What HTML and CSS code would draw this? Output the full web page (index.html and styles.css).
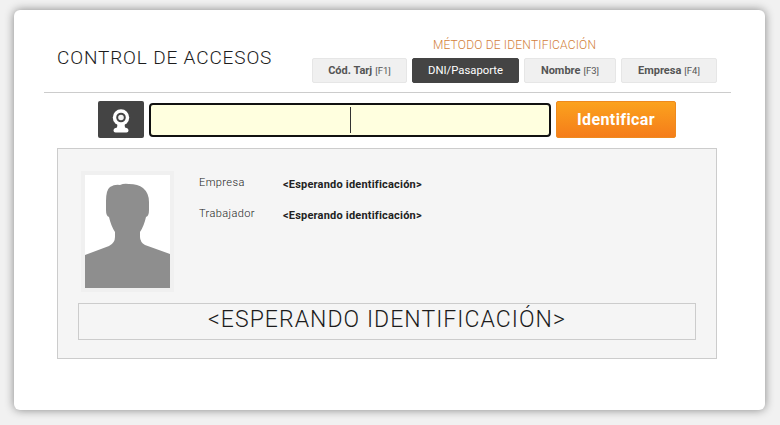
FILE: index.html
```html
<!DOCTYPE html>
<html lang="en">
<head>
    <meta charset="UTF-8">
    <title>Control de accesos</title>
    <link rel="stylesheet" href="styles.css">
</head>
<body>

    <div class="card">
        <div class="header">
            <h1>CONTROL DE ACCESOS</h1>
            <div class="method">
                <div class="method-label">MÉTODO DE IDENTIFICACIÓN</div>
                <div class="tabs">
                    <div class="tab tab-card"><b>Cód. Tarj</b> <span>[F1]</span></div>
                    <div class="tab tab-dni active">DNI/Pasaporte</div>
                    <div class="tab tab-name"><b>Nombre</b> <span>[F3]</span></div>
                    <div class="tab tab-company"><b>Empresa</b> <span>[F4]</span></div>
                </div>
            </div>
        </div>

        <div class="search">
            <div class="cam-btn">
                <svg width="18" height="24" viewBox="0 0 18 24">
                    <path d="M5.5 15 L5 18.5 Q1.5 19 1.5 21.5 Q1.5 23.5 3.5 23.5 H14.5 Q16.5 23.5 16.5 21.5 Q16.5 19 13 18.5 L12.5 15 Z" fill="#fff"/>
                    <circle cx="9" cy="8.5" r="8.2" fill="#fff"/>
                    <circle cx="9" cy="8.5" r="3.8" fill="#f4f4f4" stroke="#444" stroke-width="2"/>
                </svg>
            </div>
            <div class="id-input"><div class="caret"></div></div>
            <div class="id-btn">Identificar</div>
        </div>

        <div class="panel">
            <div class="info">
                <div class="photo">
                    <svg width="85" height="113" viewBox="0 0 85 113">
                        <path d="M0 113 V80 L24 71 Q30 68 30 62 V57 Q26 51 24 42 Q21 41 21 35 V26 Q21 15 25 12 Q30 9 35 10 Q39 8 44 9 Q53 9 58 13 Q64 18 64 27 V35 Q64 41 61 42 Q59 51 55 57 V62 Q55 67 60 70 L85 79 V113 Z" fill="#8e8e8e"/>
                    </svg>
                </div>
                <div class="fields">
                    <div class="field">
                        <div class="field-name">Empresa</div>
                        <div class="field-value">&lt;Esperando identificación&gt;</div>
                    </div>
                    <div class="field">
                        <div class="field-name">Trabajador</div>
                        <div class="field-value">&lt;Esperando identificación&gt;</div>
                    </div>
                </div>
            </div>
            <div class="result">&lt;ESPERANDO IDENTIFICACIÓN&gt;</div>
        </div>
    </div>

</body>
</html>
```

FILE: styles.css
```css
* {
    box-sizing: border-box;
    margin: 0;
    padding: 0;
    font-family: 'Roboto', sans-serif;
}

body {
    background: #f1f1f1;
    width: 780px;
    height: 425px;
    padding: 10px 15px 15px 14px;
    overflow: hidden;
}

.card {
    background: #fff;
    height: 400px;
    border-radius: 6px;
    box-shadow: 0 0 10px rgba(0, 0, 0, 0.45);
    padding: 0 34px 0 30px;
}

/* Header */
.header {
    display: flex;
    justify-content: space-between;
    align-items: flex-end;
    height: 73px;
    padding: 0 14px 9px 13px;
    border-bottom: 1px solid #ccc;
    box-sizing: content-box;
}

h1 {
    font-size: 19px;
    font-weight: 300;
    letter-spacing: 0.85px;
    color: #1c1c1c;
    margin-bottom: 14px;
}

.method-label {
    text-align: center;
    font-size: 12px;
    font-weight: 300;
    letter-spacing: 0.2px;
    color: #d2803a;
    margin-bottom: 6px;
}

.tabs {
    display: flex;
    gap: 5px;
}

.tab {
    height: 25px;
    background: #f0f0f0;
    border: 1px solid #e6e6e6;
    border-radius: 2px;
    font-size: 11px;
    color: #555;
    display: flex;
    align-items: center;
    justify-content: center;
    gap: 3px;
}

.tab b { font-weight: 700; }
.tab span { font-size: 9.5px; }

.tab-card { width: 95px; }
.tab-dni { width: 107px; }
.tab-name { width: 92px; }
.tab-company { width: 96px; }

.tab.active {
    background: #444;
    border-color: #444;
    color: #fff;
    font-size: 11.3px;
}

/* Search row */
.search {
    display: flex;
    align-items: center;
    gap: 5px;
    padding-left: 54px;
    margin-top: 8px;
    height: 37px;
}

.cam-btn {
    width: 46px;
    height: 37px;
    background: #444;
    border-radius: 2px;
    padding-top: 2px;
    display: flex;
    align-items: center;
    justify-content: center;
}

.id-input {
    width: 402px;
    height: 34px;
    background: #ffffdf;
    border: 2px solid #111;
    border-radius: 4px;
    padding: 2px 0 2px 199px;
}

.caret {
    width: 1px;
    height: 26px;
    background: #333;
}

.id-btn {
    width: 120px;
    height: 37px;
    background: linear-gradient(#fba21e, #f57d1a);
    border: 1px solid #ee8a1e;
    border-radius: 2px;
    color: #fff;
    font-size: 16px;
    font-weight: 700;
    letter-spacing: 0.4px;
    display: flex;
    align-items: center;
    justify-content: center;
}

/* Panel */
.panel {
    width: 660px;
    height: 211px;
    margin: 10px 0 0 13px;
    background: #f5f5f5;
    border: 1px solid #ccc;
    padding: 22px 20px 0 20px;
}

.info {
    display: flex;
    height: 122px;
    padding-left: 3px;
}

.photo {
    width: 93px;
    height: 121px;
    border: 4px solid #f0f0f0;
    background: #fff;
    line-height: 0;
}

.fields {
    display: flex;
    flex-direction: column;
    gap: 13px;
    padding: 4px 0 0 25px;
}

.field {
    display: flex;
    align-items: center;
    height: 18px;
}

.field-name {
    width: 84px;
    font-size: 11px;
    font-weight: 300;
    letter-spacing: 0.4px;
    color: #222;
    margin-top: -4px;
}

.field-value {
    font-size: 11px;
    font-weight: 700;
    letter-spacing: 0.2px;
    color: #222;
}

.result {
    width: 618px;
    height: 37px;
    margin-top: 10px;
    border: 1px solid #ccc;
    text-align: center;
    font-size: 23px;
    font-weight: 300;
    letter-spacing: 1.05px;
    line-height: 32px;
    color: #1c1c1c;
}
```
